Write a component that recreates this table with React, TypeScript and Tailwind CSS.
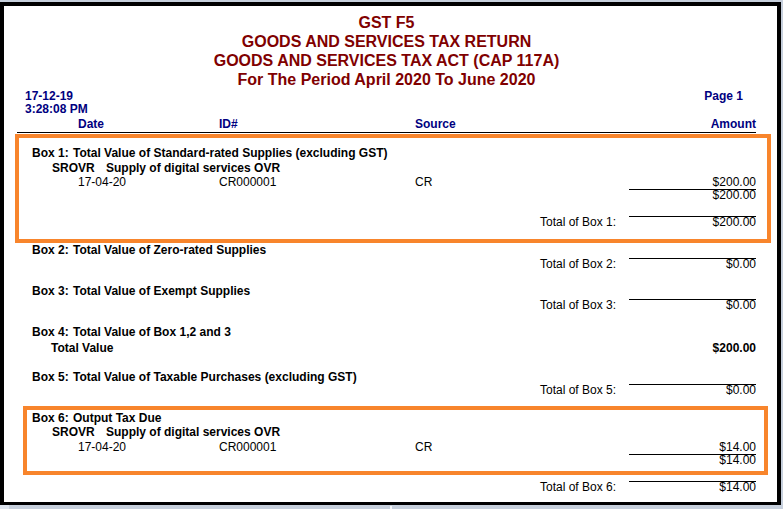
const navy = "text-[#000080]";

function BoxTitle({ no, title, className = "" }: { no: number; title: string; className?: string }) {
  return (
    <div className={`flex h-[14px] pl-[28px] font-bold leading-[14px] ${className}`}>
      <span className="w-[41px]">Box {no}:</span>
      <span>{title}</span>
    </div>
  );
}

function CodeRow({ className = "" }: { className?: string }) {
  return (
    <div className={`flex h-[14px] pl-[48px] font-bold leading-[14px] ${className}`}>
      <span className="w-[54px]">SROVR</span>
      <span>Supply of digital services OVR</span>
    </div>
  );
}

function DetailRow({ amount, className = "" }: { amount: string; className?: string }) {
  return (
    <div className={`flex h-[14px] pl-[74px] pr-[21px] leading-[14px] ${className}`}>
      <span className="w-[141px]">17-04-20</span>
      <span className="w-[196px]">CR000001</span>
      <span className="flex-1">CR</span>
      <span className="w-[127px] text-right">{amount}</span>
    </div>
  );
}

function SubTotal({ amount }: { amount: string }) {
  return (
    <div className="flex justify-end pr-[21px]">
      <span className="w-[127px] border-t border-black text-right leading-[11px]">{amount}</span>
    </div>
  );
}

function TotalRow({ no, amount, className = "" }: { no: number; amount: string; className?: string }) {
  return (
    <div className={`flex justify-end pr-[21px] ${className}`}>
      <span className="w-[89px] pt-[1px] leading-[11px]">Total of Box {no}:</span>
      <span className="w-[127px] border-t border-black text-right leading-[11px]">{amount}</span>
    </div>
  );
}

export default function App() {
  return (
    <div className="w-[783px] h-[509px] overflow-hidden bg-[#c6cfdc] pt-[2px] font-['Liberation_Sans',Arial,sans-serif] text-[12px] text-black">
      <div className="relative w-[781px] h-[503px] border-l-4 border-t-4 border-r-4 border-b-[3px] border-black bg-white">
        {/* report heading */}
        <div className="pt-[7px] pr-2 text-center text-[16px] font-bold leading-[19px] text-[#800000]">
          <div>GST F5</div>
          <div>GOODS AND SERVICES TAX RETURN</div>
          <div>GOODS AND SERVICES TAX ACT (CAP 117A)</div>
          <div>For The Period April 2020 To June 2020</div>
        </div>

        <div className={`mt-[1px] flex justify-between pl-[21px] pr-[34px] font-bold leading-[13px] ${navy}`}>
          <div>
            <div>17-12-19</div>
            <div>3:28:08 PM</div>
          </div>
          <div>Page 1</div>
        </div>

        <div className={`ml-[13px] mr-[21px] mt-[2px] flex h-[15px] border-b border-black font-bold leading-[13px] ${navy}`}>
          <span className="w-[202px] pl-[61px]">Date</span>
          <span className="w-[196px]">ID#</span>
          <span className="flex-1">Source</span>
          <span>Amount</span>
        </div>

        <BoxTitle no={1} title="Total Value of Standard-rated Supplies (excluding GST)" className="mt-[13px]" />
        <CodeRow className="mt-[1px]" />
        <DetailRow amount="$200.00" />
        <SubTotal amount="$200.00" />
        <TotalRow no={1} amount="$200.00" className="mt-[15px]" />

        <BoxTitle no={2} title="Total Value of Zero-rated Supplies" className="mt-[15px]" />
        <TotalRow no={2} amount="$0.00" className="mt-[1px]" />

        <BoxTitle no={3} title="Total Value of Exempt Supplies" className="mt-[14px]" />
        <TotalRow no={3} amount="$0.00" className="mt-[1px]" />

        <BoxTitle no={4} title="Total Value of Box 1,2 and 3" className="mt-[14px]" />
        <div className="mt-[2px] flex h-[14px] pl-[47px] pr-[21px] font-bold leading-[14px]">
          <span className="flex-1">Total Value</span>
          <span>$200.00</span>
        </div>

        <BoxTitle no={5} title="Total Value of Taxable Purchases (excluding GST)" className="mt-[15px]" />
        <TotalRow no={5} amount="$0.00" />

        <BoxTitle no={6} title="Output Tax Due" className="mt-[15px]" />
        <CodeRow />
        <DetailRow amount="$14.00" className="mt-[1px]" />
        <SubTotal amount="$14.00" />
        <TotalRow no={6} amount="$14.00" className="mt-[15px]" />

        {/* highlight annotations drawn over the report */}
        <div className="absolute left-[11px] top-[128px] w-[756px] h-[109px] border-4 border-[#f8852c]" />
        <div className="absolute left-[19px] top-[400px] w-[745px] h-[69px] border-4 border-[#f8852c]" />
      </div>
      <div className="flex h-[4px]">
        <div className="w-[9px] bg-[#dde4ee]" />
        <div className="ml-[381px] mt-[1px] h-[3px] w-[2px] bg-[#f4f6fa]" />
      </div>
    </div>
  );
}
